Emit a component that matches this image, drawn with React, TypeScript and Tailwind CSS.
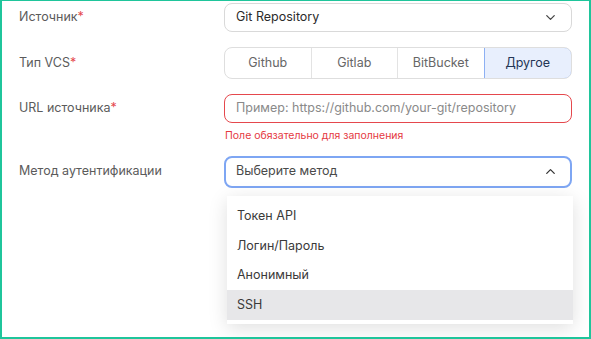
import { ChevronDown, ChevronUp } from 'lucide-react'

const font = { fontFamily: 'Inter, "Noto Sans", sans-serif' }

function Label({ text, required }: { text: string; required?: boolean }) {
  return (
    <div className="w-[205px] shrink-0 text-[12.5px] text-[#5b5b5b]">
      {text}
      {required && <span className="text-[#e5484d]">*</span>}
    </div>
  )
}

export default function App() {
  const vcs = ['Github', 'Gitlab', 'BitBucket', 'Другое']
  const methods = ['Токен API', 'Логин/Пароль', 'Анонимный', 'SSH']

  return (
    <div
      className="w-[591px] h-[339px] bg-white border-t border-l-2 border-r-2 border-b-2 border-[#1fc59b] overflow-hidden"
      style={font}
    >
      <div className="pl-[17px] pt-[2px] flex flex-col">
        <div className="flex items-center h-[29px]">
          <Label text="Источник" required />
          <div className="w-[348px] h-[29px] flex items-center justify-between pl-[11px] pr-3 rounded-lg border border-[#d9d9d9] text-[12.5px] text-[#2b2b2b]">
            <span>Git Repository</span>
            <ChevronDown size={15} strokeWidth={2} className="text-[#444] mr-[1px]" />
          </div>
        </div>

        <div className="flex items-center h-[32px] mt-[15px]">
          <Label text="Тип VCS" required />
          <div className="w-[348px] h-[32px] grid grid-cols-4 rounded-lg border border-[#dedede] text-[12.5px] overflow-hidden">
            {vcs.map((v, i) => (
              <div
                key={v}
                className={
                  i === 3
                    ? 'flex items-center justify-center bg-[#e8effd] text-[#243656] border border-[#8db0f3] rounded-r-lg -m-px'
                    : 'flex items-center justify-center text-[#666] border-r border-[#e3e3e3]'
                }
              >
                {v}
              </div>
            ))}
          </div>
        </div>

        <div className="flex items-center h-[29px] mt-[15px]">
          <Label text="URL источника" required />
          <div className="w-[348px] h-[29px] flex items-center pl-[11px] rounded-lg border border-[#e5484d] text-[12.5px] text-[#8a8a8a]">
            Пример: https://github.com/your-git/repository
          </div>
        </div>
        <div className="flex mt-[5px]">
          <div className="w-[206px] shrink-0" />
          <div className="text-[10.5px] text-[#e5393f]">Поле обязательно для заполнения</div>
        </div>

        <div className="flex items-center h-[32px] mt-[12px]">
          <Label text="Метод аутентификации" />
          <div className="w-[348px] h-[32px] flex items-center justify-between pl-[10px] pr-3 rounded-lg border-2 border-[#7ea6f3] text-[12.5px] text-[#4a4a4a]">
            <span>Выберите метод</span>
            <ChevronUp size={15} strokeWidth={2} className="text-[#333]" />
          </div>
        </div>

        <div className="flex mt-[8px]">
          <div className="w-[208px] shrink-0" />
          <div className="w-[346px] bg-white shadow-[0_4px_18px_rgba(0,0,0,0.13)] pt-[6px] pb-[4px] text-[12.5px] text-[#3a3a3a]">
            {methods.map((m) => (
              <div
                key={m}
                className={
                  'h-[29.5px] flex items-center px-[10px] ' + (m === 'SSH' ? 'bg-[#e7e7e9]' : '')
                }
              >
                {m}
              </div>
            ))}
          </div>
        </div>
      </div>
    </div>
  )
}
